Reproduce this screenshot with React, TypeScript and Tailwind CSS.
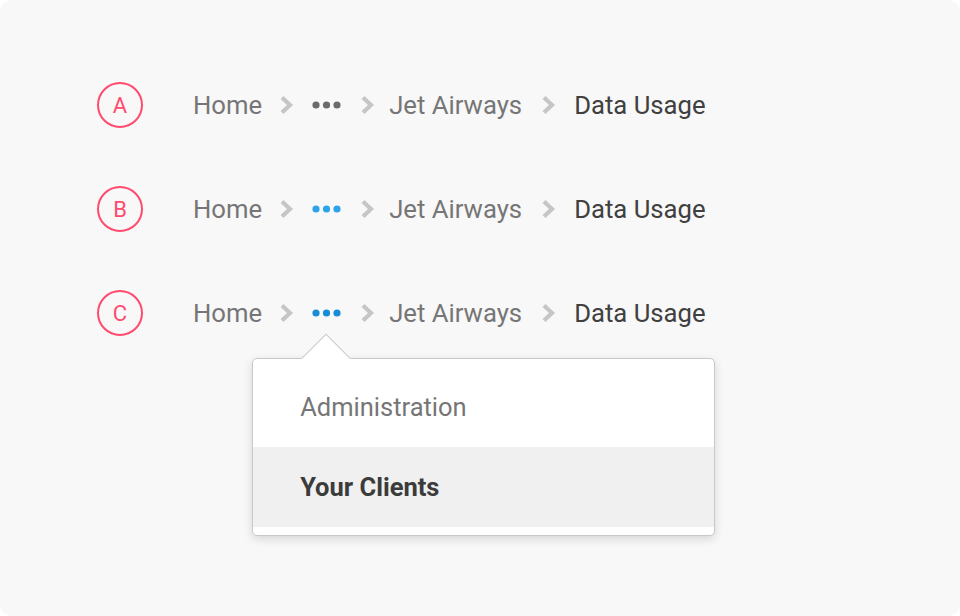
import React from 'react';

const Chevron = () => (
  <svg width="15" height="22" viewBox="0 0 15 22" className="shrink-0">
    <polyline points="3,3.5 11,11 3,18.5" fill="none" stroke="#c6c6c6" strokeWidth="4.2" />
  </svg>
);

const Dots = ({ color }: { color: string }) => (
  <svg width="29" height="8" viewBox="0 0 29 8" className="shrink-0">
    <circle cx="4" cy="4" r="3.6" fill={color} />
    <circle cx="14.5" cy="4" r="3.6" fill={color} />
    <circle cx="25" cy="4" r="3.6" fill={color} />
  </svg>
);

const Popover = () => (
  <div className="absolute left-[-60px] top-[49px] z-10 w-[463px]">
    <div className="relative rounded-[5px] border border-[#c9c9c9] bg-white py-2 shadow-[0_3px_10px_rgba(0,0,0,0.14)]">
      {/* arrow, clipped so only the top half of the rotated square shows */}
      <div className="absolute left-[47px] top-[-26px] h-[26px] w-[52px] overflow-hidden">
        <div className="absolute left-[8px] top-[8px] h-[36px] w-[36px] rotate-45 border border-[#c9c9c9] bg-white" />
      </div>
      <div className="flex h-[80px] items-center bg-white pl-[47px] text-[25.5px] text-[#767676]">Administration</div>
      <div className="flex h-[80px] items-center bg-[#f0f0f0] pl-[47px] text-[25.5px] font-bold text-[#3b3b3b]">Your Clients</div>
    </div>
  </div>
);

const Row = ({ letter, dotColor, open }: { letter: string; dotColor: string; open?: boolean }) => (
  <div className="flex h-[46px] items-center">
    <div className="flex h-[46px] w-[46px] items-center justify-center rounded-full border-2 border-[#ff4b6e] text-[22px] text-[#ff4b6e]">{letter}</div>
    <div className="ml-[50px] flex items-center text-[25.7px] text-[#767676]">
      <span>Home</span>
      <span className="ml-[17px]"><Chevron /></span>
      <span className="relative ml-[18px] flex items-center">
        <Dots color={dotColor} />
        {open && <Popover />}
      </span>
      <span className="ml-[19px]"><Chevron /></span>
      <span className="ml-[14px]">Jet Airways</span>
      <span className="ml-[19px]"><Chevron /></span>
      <span className="ml-[18px] text-[#404040]">Data Usage</span>
    </div>
  </div>
);

export default function App() {
  return (
    <div className="bg-white" style={{ fontFamily: 'Roboto, "Liberation Sans", sans-serif' }}>
      <div className="h-[616px] w-[960px] rounded-[12px] bg-[#f8f8f8] pl-[97px] pt-[82px]">
        <div className="flex flex-col gap-[58px]">
          <Row letter="A" dotColor="#6b6b6b" />
          <Row letter="B" dotColor="#2ea3e8" />
          <Row letter="C" dotColor="#198cd6" open />
        </div>
      </div>
    </div>
  );
}
